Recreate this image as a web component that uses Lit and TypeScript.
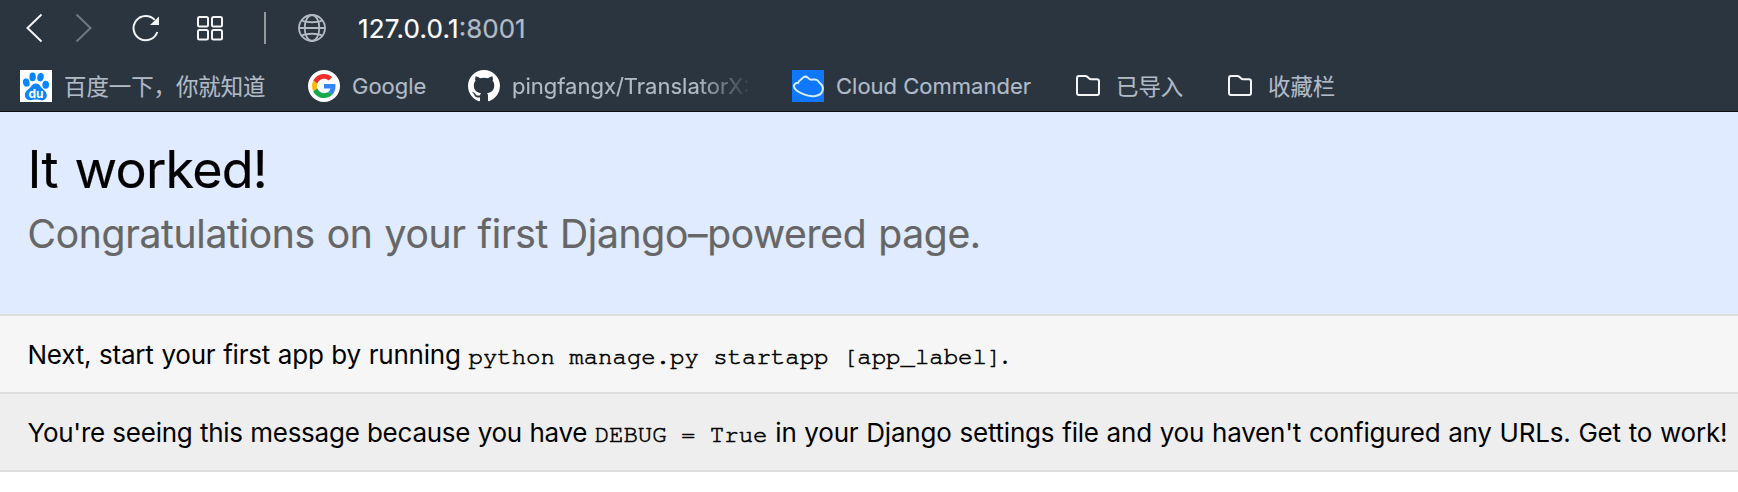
import { LitElement, html, css, svg } from "lit";
import { customElement } from "lit/decorators.js";

const baidu = html`<svg class="ico" width="32" height="32" viewBox="0 0 32 32">
  <rect width="32" height="32" fill="#fff" />
  <g fill="#0a84ff">
    <ellipse cx="6.3" cy="12.6" rx="3.3" ry="4.1" transform="rotate(-12 6.3 12.6)" />
    <ellipse cx="12.6" cy="6.9" rx="3.2" ry="4.3" />
    <ellipse cx="20.5" cy="7.2" rx="3.2" ry="4.2" transform="rotate(12 20.5 7.2)" />
    <ellipse cx="25.7" cy="14.8" rx="3.3" ry="4" />
    <path d="M15.9 13.6c2.6 0 3.8 1.6 5 3.3 1.500 2 5.900 4.300 5.900 8.300 0 3.200-2.400 5-5 5-2 0-3.600-.6-5.900-.6s-3.900.6-5.900.6c-2.700 0-5.100-1.900-5.100-5.200 0-4 4.300-6 6-8.200 1.200-1.700 2.400-3.200 5-3.200z" />
  </g>
  <text class="du" x="15.900" y="28" text-anchor="middle" fill="#fff">du</text>
</svg>`;

const google = html`<svg class="ico" width="32" height="32" viewBox="0 0 32 32">
  <circle cx="16" cy="16" r="16" fill="#fff" />
  <g transform="translate(4 4) scale(.5)">
    <path fill="#f32d2a" d="M24 9.500c3.540 0 6.710 1.220 9.210 3.600l6.850-6.850C35.900 2.380 30.470 0 24 0 14.620 0 6.510 5.380 2.560 13.220l7.980 6.190C12.430 13.720 17.740 9.500 24 9.500z" />
    <path fill="#2e86f7" d="M46.980 24.550c0-1.570-.15-3.090-.38-4.550H24v9.020h12.940c-.58 2.960-2.260 5.480-4.780 7.180l7.730 6c4.510-4.180 7.090-10.360 7.090-17.650z" />
    <path fill="#fbb90c" d="M10.530 28.590c-.48-1.450-.76-2.990-.76-4.590s.27-3.140.76-4.590l-7.980-6.190C.92 16.460 0 20.120 0 24c0 3.880.92 7.540 2.560 10.780l7.970-6.190z" />
    <path fill="#14a94b" d="M24 48c6.480 0 11.930-2.130 15.890-5.810l-7.730-6c-2.150 1.450-4.920 2.300-8.160 2.300-6.260 0-11.570-4.220-13.470-9.910l-7.980 6.190C6.510 42.620 14.620 48 24 48z" />
  </g>
</svg>`;

const github = html`<svg class="ico" width="32" height="32" viewBox="0 0 16 16">
  <path fill="#fff" d="M8 0C3.58 0 0 3.58 0 8c0 3.54 2.29 6.53 5.47 7.59.4.07.55-.17.55-.38 0-.19-.01-.82-.01-1.49-2.01.37-2.53-.49-2.69-.94-.09-.23-.48-.94-.82-1.13-.28-.15-.68-.52-.01-.53.63-.01 1.080.58 1.230.82.72 1.210 1.870.87 2.330.66.07-.52.28-.87.51-1.070-1.780-.2-3.640-.89-3.640-3.950 0-.87.31-1.590.82-2.150-.08-.2-.36-1.020.08-2.120 0 0 .67-.21 2.200.82.64-.18 1.320-.27 2-.27s1.360.09 2 .27c1.530-1.040 2.200-.82 2.200-.82.44 1.100.16 1.920.08 2.120.51.56.82 1.270.82 2.150 0 3.070-1.870 3.750-3.650 3.950.29.25.54.73.54 1.480 0 1.070-.01 1.930-.01 2.200 0 .21.15.46.55.38A8.010 8.010 0 0 0 16 8c0-4.420-3.580-8-8-8z" />
</svg>`;

const cloud = html`<svg class="ico" width="32" height="32" viewBox="0 0 32 32">
  <rect width="32" height="32" fill="#0f78ff" />
  <path fill="none" stroke="#d9ecff" stroke-width="2" stroke-linejoin="round"
    d="M6.300 12.800C6.300 10.500 9.300 9.800 10.500 8.200c1.500-1.700 3.800-1.800 5.500-.4 1.300 1 1.500 2 3.500 1.900 2-.2 3.800-.7 5.500.3 1.400.9 1.500 2.100 3 3.200 2.700 2 3.300 5.500 2.300 8.200-1 2.800-3.600 4-6.800 4.500-4 .6-7.500.2-11.500-1.500-3-1.300-5-2.200-7-3.700-2.400-1.800-3.700-3.500-2.900-5.500.7-1.600 2.200-2.400 4.200-2.400z" />
</svg>`;

const folder = html`<svg class="ico folder" width="28" height="32" viewBox="0 0 28 32">
  <path fill="none" stroke="#f4f6f8" stroke-width="2" stroke-linejoin="round"
    d="M5 6h6.300c.7 0 1.200.2 1.700.6l2.300 2c.5.400 1 .6 1.700.6H23a2 2 0 0 1 2 2V23a2 2 0 0 1-2 2H5a2 2 0 0 1-2-2V8a2 2 0 0 1 2-2z" />
</svg>`;

const bookmarks = [
  { icon: baidu, label: "百度一下，你就知道", cls: "cjk" },
  { icon: google, label: "Google", cls: "" },
  { icon: github, label: "pingfangx/TranslatorX:", cls: "fade" },
  { icon: cloud, label: "Cloud Commander", cls: "" },
  { icon: folder, label: "已导入", cls: "cjk" },
  { icon: folder, label: "收藏栏", cls: "cjk" },
];

@customElement("browser-chrome")
class BrowserChrome extends LitElement {
  static styles = css`
    :host {
      display: block;
      height: 111px;
      background: #2b353f;
      border-bottom: 1px solid #0c0f12;
      font-family: "Inter", "Noto Sans CJK SC", sans-serif;
      color: #b0bbc7;
    }
    svg { display: block; flex: none; }
    .nav {
      display: flex;
      align-items: center;
      height: 56px;
      padding-left: 24px;
    }
    .forward { margin-left: 28px; }
    .reload { margin-left: 37px; }
    .tiles { margin-left: 34px; }
    .divider { width: 2px; height: 32px; margin-left: 39px; background: #999; }
    .globe { margin-left: 31px; }
    .url { margin-left: 31px; padding-top: 2px; font-size: 26px; line-height: 32px; white-space: nowrap; -webkit-text-stroke: 0.2px; }
    .host { color: #fff; letter-spacing: 0.2px; }
    .marks {
      display: grid;
      grid-template-columns: 288px 160px 324px 282px 152px 150px;
      padding-left: 20px;
      padding-top: 14px;
    }
    .mark { display: flex; align-items: center; gap: 12px; height: 32px; min-width: 0; }
    .folder { margin-right: 2px; }
    .label { font-size: 22px; line-height: 32px; white-space: nowrap; -webkit-text-stroke: 0.15px; }
    .cjk { font-family: "Noto Sans CJK SC", sans-serif; font-size: 22.4px; line-height: 32px; padding-bottom: 3px; }
    .fade {
      width: 240px;
      overflow: hidden;
      -webkit-mask-image: linear-gradient(90deg, #000 185px, transparent 240px);
      mask-image: linear-gradient(90deg, #000 185px, transparent 240px);
    }
    .du { font: 700 12px "Inter", sans-serif; }
  `;
  render() {
    const tile = (x: number, y: number) =>
      svg`<rect x=${x} y=${y} width="10" height="9.500" rx="1.500" />`;
    return html`
      <div class="nav">
        <svg width="20" height="32" viewBox="0 0 20 32"><path d="M17.500 2.500 3.500 16l14 13.500" fill="none" stroke="#f2f4f6" stroke-width="2" /></svg>
        <svg class="forward" width="20" height="32" viewBox="0 0 20 32"><path d="m4.500 2.500 14 13.500-14 13.500" fill="none" stroke="#6f7982" stroke-width="2" /></svg>
        <svg class="reload" width="32" height="32" viewBox="0 0 32 32">
          <path d="M28.300 20a12.200 12.200 0 1 1-2.500-12.100" fill="none" stroke="#f2f4f6" stroke-width="2" />
          <path d="M30 4.500V13h-9z" fill="#f2f4f6" />
        </svg>
        <svg class="tiles" width="30" height="32" viewBox="0 0 30 32">
          <g fill="none" stroke="#f2f4f6" stroke-width="2">${tile(3, 5)}${tile(17, 5)}${tile(3, 18)}${tile(17, 18)}</g>
        </svg>
        <div class="divider"></div>
        <svg class="globe" width="30" height="32" viewBox="0 0 30 32">
          <g fill="none" stroke="#b4bac2" stroke-width="1.800">
            <circle cx="15" cy="16" r="13" />
            <ellipse cx="15" cy="16" rx="7.300" ry="13" />
            <path d="M2 16h26M4.500 8.600c6 2.200 15 2.200 21 0M4.500 23.400c6-2.200 15-2.200 21 0" />
          </g>
        </svg>
        <div class="url"><span class="host">127.0.0.1</span><span>:8001</span></div>
      </div>
      <div class="marks">
        ${bookmarks.map(
          (b) => html`<div class="mark">${b.icon}<span class="label ${b.cls}">${b.label}</span></div>`
        )}
      </div>
    `;
  }
}

@customElement("app-root")
class AppRoot extends LitElement {
  static styles = css`
    :host {
      display: block;
      height: 492px;
      overflow: hidden;
      background: #fff;
      color: #000;
      font-family: "Inter", "Liberation Sans", sans-serif;
      font-size: 26px;
    }
    .summary {
      box-sizing: border-box;
      height: 204px;
      padding: 26px 27.5px 0;
      background: #e0ebff;
      border-bottom: 2px solid #ddd;
    }
    h1, h2, p { margin: 0; font-weight: 400; white-space: nowrap; }
    h1 { font-size: 52px; line-height: 64px; letter-spacing: -0.75px; word-spacing: 3px; -webkit-text-stroke: 0.2px; }
    h2 { font-size: 39px; line-height: 48px; margin-top: 8px; color: #666; letter-spacing: -0.3px; word-spacing: 1.3px; -webkit-text-stroke: 0.2px; }
    .row {
      box-sizing: border-box;
      height: 78px;
      padding: 0 0 0 27.5px;
      border-bottom: 2px solid #ddd;
      display: flex;
      align-items: center;
    }
    .next { background: #f6f6f6; letter-spacing: -0.22px; word-spacing: 0.7px; }
    .debug { background: #eee; letter-spacing: -0.25px; word-spacing: 0.35px; }
    .tail { letter-spacing: -0.2px; word-spacing: 0.7px; }
    code {
      font-family: "FreeMono", "Liberation Mono", monospace;
      font-size: 24px;
      letter-spacing: 0;
      word-spacing: 0;
      -webkit-text-stroke: 0.6px #000;
    }
  `;
  render() {
    return html`
      <browser-chrome></browser-chrome>
      <div class="summary">
        <h1>It worked!</h1>
        <h2>Congratulations on your first Django–powered page.</h2>
      </div>
      <div class="row next">
        <p>Next, start your first app by running <code>python manage.py startapp [app_label]</code>.</p>
      </div>
      <div class="row debug">
        <p>You're seeing this message because you have <code>DEBUG = True</code><span class="tail"> in your Django settings file and you haven't configured any URLs. Get to work!</span></p>
      </div>
    `;
  }
}
